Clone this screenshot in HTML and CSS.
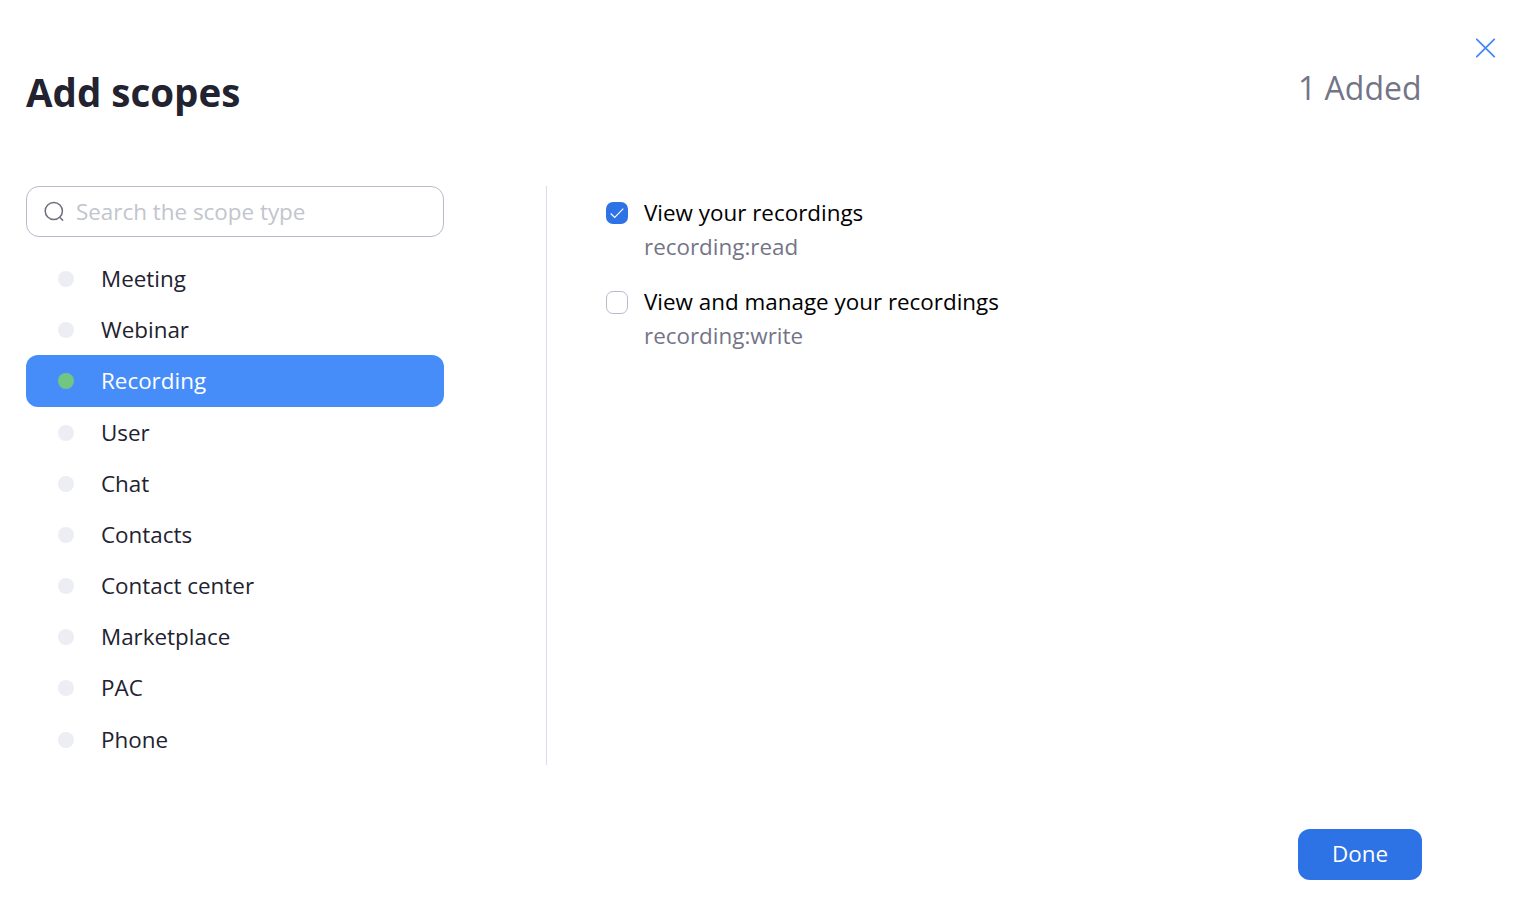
FILE: index.html
```html
<!DOCTYPE html>
<html lang="en">
<head>
<meta charset="utf-8">
<title>Add scopes</title>
<link rel="stylesheet" href="styles.css">
</head>
<body>
<main class="dialog">
  <button class="close" aria-label="Close"><svg width="20" height="20" viewBox="0 0 20 20"><path d="M.8 1.3 18.2 18.7M18.2 1.3.8 18.7"/></svg></button>
  <header class="header">
    <h1 class="title">Add scopes</h1>
    <div class="count">1 Added</div>
  </header>
  <div class="body">
    <aside class="sidebar">
      <label class="search">
        <svg width="22" height="22" viewBox="0 0 22 22"><circle cx="10.8" cy="10" r="8.6"/><path d="M17 16.4 19.7 19.2"/></svg>
        <input class="search-input" type="text" placeholder="Search the scope type">
      </label>
      <ul class="types">
        <li class="type"><span class="dot"></span>Meeting</li>
        <li class="type"><span class="dot"></span>Webinar</li>
        <li class="type active"><span class="dot"></span>Recording</li>
        <li class="type"><span class="dot"></span>User</li>
        <li class="type"><span class="dot"></span>Chat</li>
        <li class="type"><span class="dot"></span>Contacts</li>
        <li class="type"><span class="dot"></span>Contact center</li>
        <li class="type"><span class="dot"></span>Marketplace</li>
        <li class="type"><span class="dot"></span>PAC</li>
        <li class="type"><span class="dot"></span>Phone</li>
      </ul>
    </aside>
    <section class="scopes">
      <div class="scope">
        <span class="check checked"><svg width="22" height="22" viewBox="0 0 22 22"><path d="M4.7 11.5 8.7 15.5 17.3 6.6"/></svg></span>
        <div><div class="name">View your recordings</div><div class="code">recording:read</div></div>
      </div>
      <div class="scope">
        <span class="check"></span>
        <div><div class="name">View and manage your recordings</div><div class="code">recording:write</div></div>
      </div>
    </section>
  </div>
  <footer class="footer"><button class="done">Done</button></footer>
</main>
</body>
</html>
```
FILE: styles.css
```css
* { box-sizing: border-box; }
body { margin: 0; background: #fff; color: #222230; font: 22.42px/34px "Open Sans", sans-serif; }
.dialog { position: relative; height: 916px; padding: 60px 104px 36px 26px; display: flex; flex-direction: column; overflow: hidden; }
.close { position: absolute; top: 38px; right: 30px; width: 20px; height: 20px; padding: 0; border: 0; background: none; }
.close svg { display: block; fill: none; stroke: #448af5; stroke-width: 1.8; stroke-linecap: round; }
.header { display: flex; justify-content: space-between; height: 126px; }
.title { margin: 5px 0 0; font-size: 38.5px; line-height: 54px; font-weight: 700; }
.count { margin: 4px .5px 0 0; font-size: 32px; line-height: 48px; color: #747487; }
.body { display: flex; height: 579px; }
.sidebar { width: 521px; padding-right: 102px; border-right: 1px solid #dcdcec; }
.search { display: flex; align-items: center; gap: 11px; height: 51px; padding: 0 16px; border: 1px solid #babacc; border-radius: 13px; }
.search svg { flex: none; fill: none; stroke: #6e6e80; stroke-width: 1.5; stroke-linecap: round; }
.search-input { flex: 1; min-width: 0; padding: 0; border: 0; outline: 0; background: none; font: inherit; color: inherit; }
.search-input::placeholder { color: #c1c5cd; opacity: 1; }
.types { margin: 16.1px 0 0; padding: 0; list-style: none; }
.type { display: flex; align-items: center; gap: 27px; height: 51.17px; padding: 1px 0 0 32px; border-radius: 12px; }
.dot { width: 16px; height: 16px; border-radius: 50%; background: #ededf4; }
.active { background: #478dfa; color: #fff; }
.active .dot { background: #71c782; }
.scopes { padding: 10px 0 0 59px; }
.scope { display: flex; gap: 16px; height: 89px; }
.check { width: 22px; height: 23px; margin-top: 6px; border: 1px solid #babacc; border-radius: 7px; }
.checked { height: 22px; border: 0; background: #2d73e5; }
.check svg { display: block; fill: none; stroke: #fff; stroke-width: 1.1; }
.name { color: #000; }
.code { color: #747487; }
.footer { display: flex; justify-content: flex-end; margin-top: 64px; }
.done { width: 124px; height: 51px; padding: 0 0 2px; border: 0; border-radius: 12px; background: #2d73e5; color: #fff; font: inherit; }
```
